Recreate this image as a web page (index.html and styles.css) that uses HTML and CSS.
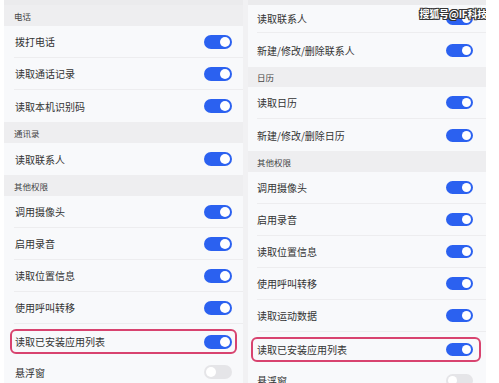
FILE: index.html
```html
<!DOCTYPE html>
<html lang="zh">
<head>
<meta charset="utf-8">
<link rel="stylesheet" href="styles.css">
</head>
<body>
<div class="screen">
  <section class="panel panel-left">
    <div class="header h21">电话</div>
    <div class="group">
      <div class="row"><div class="row-inner"><span>拨打电话</span><span class="toggle on"><i></i></span></div></div>
      <div class="row"><div class="row-inner"><span>读取通话记录</span><span class="toggle on"><i></i></span></div></div>
      <div class="row"><div class="row-inner"><span>读取本机识别码</span><span class="toggle on"><i></i></span></div></div>
    </div>
    <div class="header h21">通讯录</div>
    <div class="group">
      <div class="row"><div class="row-inner"><span>读取联系人</span><span class="toggle on"><i></i></span></div></div>
    </div>
    <div class="header h21">其他权限</div>
    <div class="group">
      <div class="row"><div class="row-inner"><span>调用摄像头</span><span class="toggle on"><i></i></span></div></div>
      <div class="row"><div class="row-inner"><span>启用录音</span><span class="toggle on"><i></i></span></div></div>
      <div class="row"><div class="row-inner"><span>读取位置信息</span><span class="toggle on"><i></i></span></div></div>
      <div class="row"><div class="row-inner"><span>使用呼叫转移</span><span class="toggle on"><i></i></span></div></div>
      <div class="row row-hl"><div class="hl"><span>读取已安装应用列表</span><span class="toggle on"><i></i></span></div></div>
      <div class="row"><div class="row-inner"><span>悬浮窗</span><span class="toggle off"><i></i></span></div></div>
    </div>
  </section>
  <div class="divider"></div>
  <section class="panel panel-right">
    <div class="group">
      <div class="row first"><div class="row-inner"><span>读取联系人</span><span class="toggle on"><i></i></span></div></div>
      <div class="row second"><div class="row-inner"><span>新建/修改/删除联系人</span><span class="toggle on"><i></i></span></div></div>
    </div>
    <div class="header h20">日历</div>
    <div class="group">
      <div class="row"><div class="row-inner"><span>读取日历</span><span class="toggle on"><i></i></span></div></div>
      <div class="row"><div class="row-inner"><span>新建/修改/删除日历</span><span class="toggle on"><i></i></span></div></div>
    </div>
    <div class="header h21">其他权限</div>
    <div class="group">
      <div class="row"><div class="row-inner"><span>调用摄像头</span><span class="toggle on"><i></i></span></div></div>
      <div class="row"><div class="row-inner"><span>启用录音</span><span class="toggle on"><i></i></span></div></div>
      <div class="row"><div class="row-inner"><span>读取位置信息</span><span class="toggle on"><i></i></span></div></div>
      <div class="row"><div class="row-inner"><span>使用呼叫转移</span><span class="toggle on"><i></i></span></div></div>
      <div class="row"><div class="row-inner"><span>读取运动数据</span><span class="toggle on"><i></i></span></div></div>
      <div class="row row-hl"><div class="hl"><span>读取已安装应用列表</span><span class="toggle on"><i></i></span></div></div>
      <div class="row"><div class="row-inner"><span>悬浮窗</span><span class="toggle off"><i></i></span></div></div>
    </div>
    <div class="watermark">搜狐号@IF科技</div>
  </section>
</div>
</body>
</html>
```

FILE: styles.css
```css
* { box-sizing: border-box; }
html, body {
  margin: 0;
  padding: 0;
  width: 499px;
  height: 383px;
  overflow: hidden;
  background: #ffffff;
  font-family: "Noto Sans CJK SC", "Noto Sans", sans-serif;
  color: #333333;
}
.screen {
  display: flex;
  align-items: flex-start;
  padding-left: 4px;
  height: 383px;
  overflow: hidden;
}
.panel {
  background: #f8f9fb;
  border-top: 5px solid #ebebed;
  height: 383px;
  overflow: hidden;
  display: flex;
  flex-direction: column;
}
.panel-left { width: 239px; }
.panel-right { width: 238px; position: relative; }
.divider {
  width: 5px;
  height: 383px;
  background: #f1f1f3;
}
.header {
  background: #eeeef0;
  font-size: 8.5px;
  color: #444;
  display: flex;
  align-items: center;
  padding-left: 10px;
  flex: none;
}
.panel-right .header { padding-left: 9px; }
.h20 { height: 20px; }
.h21 { height: 21px; }
.row {
  height: 32px;
  padding-left: 10px;
  display: flex;
  font-size: 10px;
  flex: none;
}
.panel-right .row { padding-left: 9px; }
.row.first { height: 28px; }
.row.second { height: 34px; }
.row-inner {
  flex: 1;
  display: flex;
  align-items: center;
  justify-content: space-between;
  padding-left: 1px;
  padding-right: 11px;
  border-bottom: 1px solid #ededef;
}
.panel-right .row-inner { padding-left: 0; padding-right: 13px; }
.group .row:last-child .row-inner { border-bottom: none; }
.row-hl { padding: 5px 6px 2px 6px; }
.panel-right .row-hl { padding: 5px 5px 2px 3px; }
.hl {
  flex: 1;
  display: flex;
  align-items: center;
  justify-content: space-between;
  border: 2px solid #d8436f;
  border-radius: 6px;
  padding-left: 3px;
  padding-right: 3px;
}
.panel-right .hl { padding-left: 4px; padding-right: 6px; }
.toggle {
  width: 28px;
  height: 14px;
  border-radius: 7px;
  display: flex;
  align-items: center;
  padding: 0 2px;
}
.panel-right .toggle { width: 27px; height: 13px; }
.toggle i {
  width: 10px;
  height: 10px;
  border-radius: 50%;
  background: #ffffff;
  display: block;
}
.panel-right .toggle i { width: 9px; height: 9px; }
.toggle.on { background: #2b61f0; justify-content: flex-end; }
.toggle.off { background: #e5e5e8; justify-content: flex-start; }
.watermark {
  position: absolute;
  top: 1px;
  right: -1px;
  font-size: 10px;
  font-weight: bold;
  color: #ffffff;
  letter-spacing: -0.2px;
  text-shadow: -1px 0 #333, 1px 0 #333, 0 -1px #333, 0 1px #333, 1px 1px #333, -1px -1px #333, 1px -1px #333, -1px 1px #333;
}
```
